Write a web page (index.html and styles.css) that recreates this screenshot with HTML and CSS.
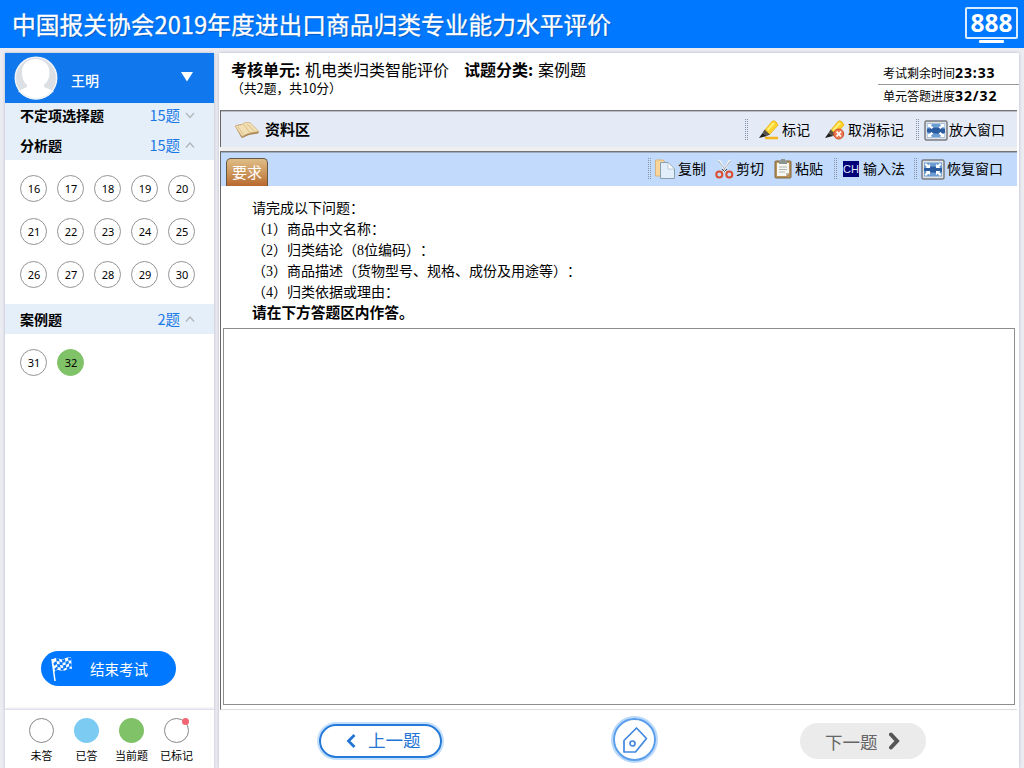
FILE: index.html
```html
<!DOCTYPE html>
<html lang="zh-CN">
<head>
<meta charset="utf-8">
<title>进出口商品归类专业能力水平评价</title>
<link rel="stylesheet" href="styles.css">
</head>
<body>
<header class="top">
  <h1 class="title">中国报关协会2019年度进出口商品归类专业能力水平评价</h1>
  <div class="seat"><div class="seat-no">888</div><div class="seat-foot"></div></div>
</header>
<div class="page">
  <aside class="side">
    <div class="user">
      <svg class="avatar" width="44" height="44" viewBox="0 0 44 44"><circle cx="22" cy="22" r="21" fill="#dcdfe3"/><path d="M8 16C8 8 14 3 21.500 3S35.500 8 35.500 16C35.500 23 33 26 30 29V31L40 35Q32 43.500 22 43.500T4 35L13 31V29C10 26 8 23 8 16Z" fill="#fff"/><circle cx="22" cy="22" r="20.700" fill="none" stroke="#eef3fa" stroke-width="1.500"/></svg>
      <span class="name">王明</span>
      <svg class="drop" width="12" height="10" viewBox="0 0 12 10"><path d="M0 0H12L6 9.500Z" fill="#fff"/></svg>
    </div>
    <div class="group first"><b>不定项选择题</b><span>15题</span><svg width="10" height="7" viewBox="0 0 10 7"><path d="M1 1L5 5.500L9 1" class="fold"/></svg></div>
    <div class="group"><b>分析题</b><span>15题</span><svg width="10" height="7" viewBox="0 0 10 7"><path d="M1 5.500L5 1L9 5.500" class="fold"/></svg></div>
    <div class="nums three">
      <i>16</i><i>17</i><i>18</i><i>19</i><i>20</i>
      <i>21</i><i>22</i><i>23</i><i>24</i><i>25</i>
      <i>26</i><i>27</i><i>28</i><i>29</i><i>30</i>
    </div>
    <div class="group last"><b>案例题</b><span>2题</span><svg width="10" height="7" viewBox="0 0 10 7"><path d="M1 5.500L5 1L9 5.500" class="fold"/></svg></div>
    <div class="nums one"><i>31</i><i class="current">32</i></div>
    <div class="finish">
      <svg width="22" height="26" viewBox="0 0 22 26"><path d="M1 3L4 25" stroke="#fff" stroke-width="1.500"/><path d="M1 4C6 -1 9 5 13 3S18 1 20 1L21 13C17 12 15 15 12 15S7 12 3 16Z" fill="#fff"/><path d="M5 2l3 .5.500 3-3-.5ZM11 4l3-1 .5 3-3 1ZM17 1.500h3l.3 3h-3ZM2.500 7l3-2 .5 3-3 2ZM8.500 5.500l3 1 .3 3-3-.7ZM14.500 6l3-1.500.3 3-3 1.500ZM6 8l3 .5.500 3-3-.5ZM12 9.500l3-1 .3 3-3 1.500ZM18 7.500h2.500l.3 3H18ZM3.500 12.500l3-2 .3 2.500-2.800 2ZM9.500 11.500l3 1v2.500l-2.700-.7ZM15.500 11.500l3-1.500.2 2.500-2.800 1.300Z" fill="#0877f9"/></svg>
      <span>结束考试</span>
    </div>
    <div class="legend">
      <div><i></i><span>未答</span></div>
      <div><i class="done"></i><span>已答</span></div>
      <div><i class="now"></i><span>当前题</span></div>
      <div><i class="flag"></i><span>已标记</span></div>
    </div>
  </aside>
  <main class="main">
    <section class="info">
      <div class="unit">
        <div class="unit-row"><b>考核单元:</b><span>机电类归类智能评价</span><b>试题分类:</b><span>案例题</span></div>
        <div class="total">（共2题，共10分）</div>
      </div>
      <div class="timer"><div class="time-row"><span>考试剩余时间</span><b>23:33</b></div><div class="time-row"><span>单元答题进度</span><b>32/32</b></div></div>
    </section>
    <section class="bar material">
      <svg class="book" width="26" height="18" viewBox="0 0 26 18"><path d="M1 5L3 4 16 2 25 11 24 12.500 15 14 8 17 7 16Z" fill="#a98552"/><path d="M1 5L8 3.500 10.500 1.500 16 1.500 25 10.500 18 11.500 13 13 8 15.500Z" fill="#f1deb2" stroke="#c8aa74" stroke-width=".6"/><path d="M9.500 3Q13 8 16 12M4 6L9.500 13.500M13 3L20 10" fill="none" stroke="#d5b67e" stroke-width=".8"/></svg>
      <b class="bar-name">资料区</b>
      <div class="tools tools-a">
        <i class="grip"></i>
        <svg width="20" height="20" viewBox="0 0 20 20"><path d="M6 18H19" stroke="#f6b51d" stroke-width="2.500"/><path d="M6 10L13 1.500Q15 0 17 2L19 5 10 15Z" fill="#ffd52b" stroke="#eeb51d"/><path d="M8.500 10L15 3" stroke="#fff07a" stroke-width="2"/><path d="M5.500 9.500L11 14.500 8 16 3.500 13Z" fill="#58544b"/><path d="M3.500 13L8 16 0 18Z" fill="#211f1c"/></svg><span>标记</span>
        <svg width="20" height="20" viewBox="0 0 20 20"><path d="M6 10L13 1.500Q15 0 17 2L19 5 10 15Z" fill="#ffd52b" stroke="#eeb51d"/><path d="M8.500 10L15 3" stroke="#fff07a" stroke-width="2"/><path d="M5.500 9.500L11 14.500 8 16 3.500 13Z" fill="#58544b"/><path d="M3.500 13L8 16 0 18Z" fill="#211f1c"/><circle cx="13.700" cy="14" r="5" fill="#ee7950" stroke="#c94e27"/><path d="M11.500 11.500L16 16.500M16 11.500L11.500 16.500" stroke="#fff" stroke-width="1.800"/></svg><span>取消标记</span>
        <i class="grip"></i>
        <svg width="24" height="21" viewBox="0 0 24 21"><rect x="1" y="1" width="22" height="19" rx="1.500" fill="#e1e2e4" stroke="#777b81" stroke-width="1.500"/><rect x="3" y="3.500" width="18" height="14" fill="#6c9ed4"/><path d="M3 9Q12 6 21 9V13Q12 15 3 12Z" fill="#2a5c9f"/><path d="M3.500 4H8L6.900 5.200 9.300 7.500 7.500 9 5 6.800 3.500 8ZM20.500 4H16L17.100 5.200 14.700 7.500 16.500 9 19 6.800 20.500 8ZM3.500 17H8L6.900 15.800 9.300 13.500 7.500 12 5 14.200 3.500 13ZM20.500 17H16L17.100 15.800 14.700 13.500 16.500 12 19 14.200 20.500 13Z" fill="#fff"/></svg><span>放大窗口</span>
      </div>
    </section>
    <section class="bar answer">
      <div class="tab">要求</div>
      <div class="tools tools-b">
        <i class="grip"></i>
        <svg width="20" height="20" viewBox="0 0 20 20"><path d="M.5 1H8L11 4V17H.5Z" fill="#f9d697" stroke="#d4b47c"/><path d="M5.500 3.500H13L19.500 10V19.500H5.500Z" fill="#e2effb" stroke="#8b9eae"/><path d="M13 3.500V10H19.500Z" fill="#fff" stroke="#a4b6c4" stroke-width=".7"/></svg><span>复制</span>
        <svg width="19" height="20" viewBox="0 0 19 20"><path d="M4 1L11 13M15 1L8 13" stroke="#f5f5f3" stroke-width="2"/><path d="M3.500 2L12 13M15.500 2L7 13" stroke="#899195" stroke-width=".7"/><path d="M7 10L9.500 12.500 12 10" fill="none" stroke="#45494b"/><circle cx="4.300" cy="15.500" r="3" fill="none" stroke="#dc4c31" stroke-width="2"/><circle cx="14.300" cy="15.500" r="3" fill="none" stroke="#dc4c31" stroke-width="2"/></svg><span>剪切</span>
        <svg width="18" height="20" viewBox="0 0 18 20"><rect x="1" y="2" width="16" height="17" rx="1" fill="#b79258" stroke="#846741"/><path d="M3 4H15V14L12 17H3Z" fill="#f7f7f2"/><path d="M5 8H13M5 10.500H13M5 13H11" stroke="#b1b5b4"/><path d="M5 5V2H7V0H11V2H13V5Z" fill="#8c9590"/><path d="M15 14H12V17Z" fill="#b8bbb9"/></svg><span>粘贴</span>
        <i class="grip"></i>
        <em class="ime">CH</em><span>输入法</span>
        <i class="grip"></i>
        <svg width="24" height="21" viewBox="0 0 24 21"><rect x="1" y="1" width="22" height="19" rx="1.500" fill="#e1e2e4" stroke="#777b81" stroke-width="1.500"/><rect x="3" y="3.500" width="18" height="14" fill="#6c9ed4"/><path d="M3 9Q12 6 21 9V13Q12 15 3 12Z" fill="#2a5c9f"/><path d="M9 9H4.500L5.800 7.700 3.500 5.500 5 4 7.300 6.200 9 5ZM15 9H19.500L18.200 7.700 20.500 5.500 19 4 16.700 6.200 15 5ZM9 12H4.500L5.800 13.300 3.500 15.500 5 17 7.300 14.800 9 16ZM15 12H19.500L18.200 13.300 20.500 15.500 19 17 16.700 14.800 15 16Z" fill="#fff"/></svg><span>恢复窗口</span>
      </div>
    </section>
    <section class="work">
      <div class="question">
        <p>请完成以下问题：</p><p>（<u>1</u>）商品中文名称：</p><p>（<u>2</u>）归类结论（<u>8</u>位编码）：</p><p>（<u>3</u>）商品描述（货物型号、规格、成份及用途等）：</p><p>（<u>4</u>）归类依据或理由：</p><p class="strong">请在下方答题区内作答。</p>
      </div>
      <div class="editor"></div>
    </section>
    <footer class="foot">
      <div class="prev"><svg width="10" height="16" viewBox="0 0 10 16"><path d="M8.500 2L2.500 8L8.500 14" fill="none" stroke="#2474d5" stroke-width="2.800"/></svg><span>上一题</span></div>
      <div class="pen"><svg width="26" height="28" viewBox="0 0 26 28"><path d="M14.500 2L24.500 12.500 13.500 26H2V14.500Z" fill="none" stroke="#4287e0" stroke-width="1.700" stroke-linejoin="round"/><circle cx="10.500" cy="17.500" r="2.500" fill="none" stroke="#4287e0" stroke-width="1.700"/></svg></div>
      <div class="next"><span>下一题</span><svg width="12" height="18" viewBox="0 0 12 18"><path d="M3 2.500L9 9L3 15.500" fill="none" stroke="#555" stroke-width="4" stroke-linecap="round"/></svg></div>
    </footer>
  </main>
</div>
</body>
</html>
```

FILE: styles.css
```css
* { box-sizing: border-box; }
body { margin: 0; width: 1024px; height: 768px; overflow: hidden; background: #ebebf2; color: #000; font-family: "Noto Sans CJK SC", sans-serif; text-spacing-trim: space-all; }
svg { display: block; flex: none; }
i, em, u { font-style: normal; text-decoration: none; }
.top { height: 48px; background: #0078ff; display: flex; justify-content: space-between; padding: 0 6px 0 12px; color: #fff; }
.title { margin: 0; font-size: 23.750px; font-weight: 400; -webkit-text-stroke: .3px #fff; line-height: 48px; white-space: nowrap; text-shadow: 1px 1px 1px #0759bb; }
.seat { width: 53px; padding-top: 7px; }
.seat-no { height: 32px; border: 2px solid #d9edff; border-radius: 2px; font: bold 24.500px/27px "Open Sans", sans-serif; text-align: center; }
.seat-foot { width: 25px; height: 3px; border-radius: 1px; background: #fff; margin: 1px auto 0; }
.page { display: flex; height: 720px; padding: 5px 5px 0; gap: 5px; }
.side { width: 209px; background: #fff; box-shadow: 0 0 3px #b9b9ca; display: flex; flex-direction: column; }
.user { height: 50px; background: #1077ed; display: flex; color: #fff; padding-left: 9px; flex: none; }
.avatar { margin-top: 3px; }
.name { width: 110px; margin-left: 13px; font-size: 14px; font-weight: 500; line-height: 54px; }
.drop { margin-top: 19px; }
.group { height: 30px; flex: none; background: #e4effa; padding: 0 19px 0 15px; display: flex; align-items: center; font-size: 14px; line-height: 28px; }
.group.first { height: 27px; padding-bottom: 3px; line-height: 24px; }
.group b { flex: 1; }
.group span { color: #1a78e5; margin-right: 5px; font-size: 14.500px; }
.fold { fill: none; stroke: #b2b5b8; stroke-width: 1.300; }
.nums { display: grid; grid-template-columns: repeat(5, 27px); column-gap: 10px; row-gap: 16px; padding: 15px 0 0 15px; align-content: start; flex: none; }
.nums.three { height: 144px; }
.nums.one { height: 317px; }
.nums i { height: 27px; border: 1px solid #949494; border-radius: 50%; text-align: center; font: 11px/25px "Noto Sans", sans-serif; padding-left: 1px; }
.nums .current { background: #80c268; border-color: #80c268; }
.finish { flex: none; width: 135px; height: 35px; margin-left: 36px; border-radius: 18px; background: #0078ff; color: #fff; display: flex; align-items: center; padding-left: 10px; gap: 17px; font-size: 14.500px; }
.legend { margin-top: 23px; flex: 1; border-top: 1px solid #dedfea; box-shadow: 0 -1px 2px #e6e6ef; display: grid; grid-template-columns: 45px 45px 45px 45px; padding: 8px 0 0 14px; font-size: 11px; text-align: center; }
.legend div { display: flex; flex-direction: column; align-items: center; }
.legend i { width: 25px; height: 25px; border: 1px solid #888; border-radius: 50%; position: relative; }
.legend .done { background: #7bcbf3; border: 0; }
.legend .now { background: #80c268; border: 0; }
.legend .flag::after { content: ""; position: absolute; top: -1px; right: -1px; width: 7px; height: 7px; border-radius: 50%; background: #f26573; }
.legend span { line-height: 15px; margin-top: 5px; white-space: nowrap; }
.main { width: 800px; background: #fff; box-shadow: 0 0 3px #b9b9ca; display: flex; flex-direction: column; }
.info { height: 57px; display: flex; justify-content: space-between; flex: none; }
.unit { padding: 5px 0 0 12px; }
.unit-row { display: grid; grid-template-columns: 74px 159px 74px auto; font-size: 16px; line-height: 22px; white-space: nowrap; }
.total { margin-left: 0; font-size: 12.800px; line-height: 16px; }
.timer { width: 141px; padding-top: 8px; }
.time-row { display: flex; height: 23px; padding-left: 5px; align-items: center; white-space: nowrap; font-size: 12px; }
.time-row + .time-row { border-top: 1px solid #999; height: 22px; }
.time-row b { font: bold 14px/20px "Noto Sans", sans-serif; letter-spacing: .9px; }
.bar { display: flex; flex: none; margin-left: 1px; border-left: 1px solid #666; border-top: 1px solid #737377; margin-right: 2px; box-shadow: inset 0 1px #b9bdc5; }
.material { height: 37px; background: #e4ebf6; padding-left: 13px; }
.book { margin-top: 10px; }
.bar-name { font-size: 15px; line-height: 36px; margin-left: 5px; }
.answer { height: 35px; margin-top: 4px; background: #c2dbfc; padding-left: 5px; box-shadow: 0 -4px #efefef, inset 0 1px #9cabc0; }
.tab { width: 42px; height: 28px; margin-top: 6px; border: 1px solid #655944; border-bottom: 0; border-radius: 5px 5px 0 0; background: linear-gradient(#dfbd87, #cb9358 55%, #b8672d); color: #fff; font-size: 15px; line-height: 25px; text-align: center; }
.tools { margin-left: auto; display: grid; align-items: center; font-size: 14px; line-height: 32px; white-space: nowrap; }
.tools span { margin-top: -2px; }
.tools-a { padding-top: 2px; grid-template-columns: 14px 23px 43px 23px 68px 8px 25px 68px; }
.tools-b { grid-template-columns: 7px 23px 37px 21px 38px 21px 39px 9px 20px 51px 7px 26px 70px; }
.grip { width: 3px; height: 22px; background: repeating-linear-gradient(#8795aa 0 1px, transparent 1px 2px); mask: linear-gradient(90deg, #000 1px, transparent 1px 2px, #000 2px); }
.ime { width: 16px; height: 16px; background: #000078; color: #e2e6fb; font: 11px/16px "Liberation Sans", sans-serif; text-align: center; }
.work { height: 524px; flex: none; margin: 0 2px 0 1px; border-left: 1px solid #666; padding: 11px 2px 0 2px; border-bottom: 1px solid #ddd; }
.question { padding-left: 29px; height: 131px; font-size: 14px; line-height: 20px; }
.question p { margin: 0; height: 21px; }
.question u { font: 14px/20px "Liberation Serif", serif; display: inline-block; width: 7px; text-align: center; }
.question .strong { font-weight: 700; font-size: 14.700px; }
.editor { height: 377px; border: 1px solid #8d8d8d; }
.foot { flex: 1; display: flex; align-items: flex-start; padding-left: 100px; }
.prev { width: 123px; height: 34px; margin-top: 14px; border: 2px solid #2479d9; border-radius: 18px; box-shadow: 0 0 0 2px #c2dffb; display: flex; align-items: center; padding-left: 25px; gap: 12px; color: #2474d5; font-size: 17.500px; line-height: 28px; }
.prev span { margin-top: -2px; }
.pen { width: 43px; height: 43px; margin: 8px 0 0 171px; border: 2px solid #5a9dec; border-radius: 50%; box-shadow: 0 0 0 2px #b9d9fa; display: grid; place-items: center; }
.next { width: 126px; height: 36px; margin: 13px 0 0 144px; border-radius: 18px; background: #ebebeb; color: #666; display: flex; align-items: center; padding-left: 25px; gap: 10px; font-size: 17.500px; }
```
